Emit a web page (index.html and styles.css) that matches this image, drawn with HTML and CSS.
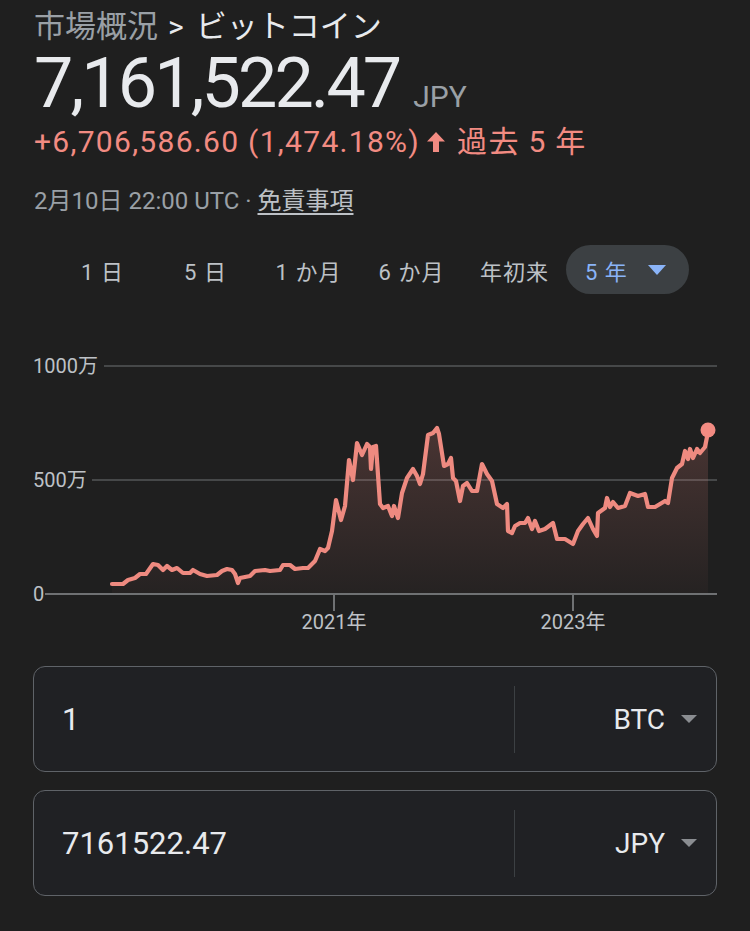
FILE: index.html
```html
<!DOCTYPE html>
<html lang="ja">
<head>
  <meta charset="UTF-8">
  <meta name="viewport" content="width=device-width, initial-scale=1.0">
  <title>ビットコイン</title>
  <link rel="stylesheet" href="styles.css">
</head>
<body>
  <main>
    <header class="summary">
      <p class="crumb"><span class="crumb-root">市場概況</span><span class="crumb-sep">&gt;</span>ビットコイン</p>
      <p class="price">7,161,522.47<span class="currency">JPY</span></p>
      <p class="change">
        +6,706,586.60 (1,474.18%)
        <svg class="arrow" viewBox="0 0 20 22" width="20" height="22"><path d="M10 1L19 10.5H13V21H7V10.5H1Z"/></svg>
        過去 5 年
      </p>
      <p class="date">2月10日 22:00 UTC · <a href="#">免責事項</a></p>
    </header>

    <nav class="tabs">
      <span class="tab">1 日</span>
      <span class="tab">5 日</span>
      <span class="tab">1 か月</span>
      <span class="tab">6 か月</span>
      <span class="tab">年初来</span>
      <span class="tab-active">5 年
        <svg viewBox="0 0 18 10" width="18" height="10"><path d="M0 0h18L9 10z"/></svg>
      </span>
    </nav>

    <svg class="chart" viewBox="0 330 750 320" width="750" height="320">
      <defs>
        <linearGradient id="fill" x1="0" y1="0" x2="0" y2="1">
          <stop offset="0" stop-color="#f28b82" stop-opacity="0.2"/>
          <stop offset="1" stop-color="#f28b82" stop-opacity="0.03"/>
        </linearGradient>
      </defs>
      <g class="grid">
        <line x1="104" y1="365" x2="717" y2="365"/>
        <line x1="92" y1="479" x2="717" y2="479"/>
      </g>
      <g class="axis-text">
        <text x="33" y="372">1000万</text>
        <text x="33" y="486">500万</text>
        <text x="33" y="600">0</text>
        <text x="334" y="628" text-anchor="middle">2021年</text>
        <text x="573" y="628" text-anchor="middle">2023年</text>
      </g>
      <path class="area" fill="url(#fill)" d="M112 583 L123 583 128 579 135 577 140 573 146 573 153 563 158 564 163 569 167 565 172 569 177 567 183 572 190 572 193 569 200 573 207 575 217 574 222 570 227 568 232 569 235 573 238 582 240 577 250 575 255 570 265 569 270 570 280 569 283 564 290 564 295 568 303 567 308 567 315 560 320 548 325 550 328 547 332 530 336 499 341 519 345 505 349 459 353 479 357 442 362 454 367 443 370 446 371 468 373 446 376 445 380 503 383 507 388 505 392 515 394 505 398 517 402 492 407 477 413 468 417 475 420 483 423 473 428 434 433 432 437 427 439 433 444 465 448 463 451 457 453 477 456 480 460 500 463 485 467 482 472 490 477 490 482 463 487 473 492 480 497 503 503 507 507 503 508 530 512 532 515 525 520 522 525 522 528 517 532 528 535 520 539 530 545 528 553 522 557 538 565 538 573 543 578 530 583 523 588 517 593 528 597 535 598 512 605 507 607 497 610 506 613 501 618 507 625 505 630 492 638 495 645 493 648 506 655 506 665 500 668 502 672 477 677 467 682 463 685 450 688 458 690 448 693 457 697 448 700 452 705 446 707 436 708 429 L708 593 L112 593 Z"/>
      <g class="baseline">
        <line x1="45" y1="593" x2="717" y2="593"/>
        <line x1="334" y1="593" x2="334" y2="610"/>
        <line x1="573" y1="593" x2="573" y2="610"/>
      </g>
      <polyline class="line" points="112,583 123,583 128,579 135,577 140,573 146,573 153,563 158,564 163,569 167,565 172,569 177,567 183,572 190,572 193,569 200,573 207,575 217,574 222,570 227,568 232,569 235,573 238,582 240,577 250,575 255,570 265,569 270,570 280,569 283,564 290,564 295,568 303,567 308,567 315,560 320,548 325,550 328,547 332,530 336,499 341,519 345,505 349,459 353,479 357,442 362,454 367,443 370,446 371,468 373,446 376,445 380,503 383,507 388,505 392,515 394,505 398,517 402,492 407,477 413,468 417,475 420,483 423,473 428,434 433,432 437,427 439,433 444,465 448,463 451,457 453,477 456,480 460,500 463,485 467,482 472,490 477,490 482,463 487,473 492,480 497,503 503,507 507,503 508,530 512,532 515,525 520,522 525,522 528,517 532,528 535,520 539,530 545,528 553,522 557,538 565,538 573,543 578,530 583,523 588,517 593,528 597,535 598,512 605,507 607,497 610,506 613,501 618,507 625,505 630,492 638,495 645,493 648,506 655,506 665,500 668,502 672,477 677,467 682,463 685,450 688,458 690,448 693,457 697,448 700,452 705,446 707,436 708,429"/>
      <circle class="dot" cx="708" cy="429" r="7.5"/>
    </svg>

    <section class="converter">
      <div class="field">
        <span class="amount">1</span>
        <span class="divider"></span>
        <span class="unit">BTC
          <svg viewBox="0 0 16 8" width="16" height="8"><path d="M0 0h16L8 8z"/></svg>
        </span>
      </div>
      <div class="field">
        <span class="amount">7161522.47</span>
        <span class="divider"></span>
        <span class="unit">JPY
          <svg viewBox="0 0 16 8" width="16" height="8"><path d="M0 0h16L8 8z"/></svg>
        </span>
      </div>
    </section>
  </main>
</body>
</html>
```

FILE: styles.css
```css
* {
  margin: 0;
  padding: 0;
  box-sizing: border-box;
}

:root {
  --bg: #1f1f1f;
  --text: #e8eaed;
  --muted: #9aa0a6;
  --soft: #bdc1c6;
  --red: #f28b82;
  --blue: #8ab4f8;
  --font: Roboto, "Noto Sans CJK JP", sans-serif;
}

body {
  background-color: var(--bg);
  color: var(--text);
  font-family: var(--font);
  width: 750px;
  min-height: 931px;
  overflow: hidden;
}

main {
  padding-top: 7px;
}

.summary {
  padding-left: 34px;
}

.crumb {
  font-size: 31px;
  line-height: 40px;
  color: var(--text);
}
.crumb-root {
  color: var(--muted);
}
.crumb-sep {
  margin: 0 12px 0 10px;
  font-size: 30px;
}

.price {
  font-size: 70px;
  line-height: 72px;
  letter-spacing: -2.9px;
  color: var(--text);
}
.currency {
  margin-left: 14px;
  font-size: 30px;
  line-height: 30px;
  letter-spacing: 0;
  color: var(--muted);
}

.change {
  display: flex;
  align-items: center;
  margin-top: 5px;
  font-size: 30px;
  line-height: 36px;
  letter-spacing: 1.3px;
  color: var(--red);
}
.arrow {
  margin: 0 11px 0 6px;
  fill: var(--red);
}

.date {
  margin-top: 26px;
  font-size: 24px;
  line-height: 30px;
  color: var(--muted);
}
.date a {
  color: var(--soft);
  text-decoration: underline;
  text-underline-offset: 4px;
}

.tabs {
  display: flex;
  align-items: center;
  margin-top: 29px;
  padding-left: 51px;
  font-size: 22px;
  color: var(--soft);
}
.tab {
  width: 103px;
  text-align: center;
  letter-spacing: 1px;
}
.tab-active {
  display: flex;
  align-items: center;
  gap: 20px;
  height: 49px;
  padding: 0 23px 0 19px;
  background-color: #3c4043;
  border-radius: 25px;
  color: var(--blue);
  letter-spacing: 1px;
}
.tab-active svg {
  fill: var(--blue);
}

.chart {
  display: block;
  margin-top: 37px;
}
.grid line {
  stroke: #555759;
  stroke-width: 1.3;
}
.baseline line {
  stroke: #6f7173;
  stroke-width: 2;
}
.axis-text {
  font-family: var(--font);
  font-size: 20px;
  fill: var(--soft);
}
.line {
  fill: none;
  stroke: #ee8a80;
  stroke-width: 4.2;
  stroke-linejoin: round;
  stroke-linecap: round;
}
.dot {
  fill: var(--red);
}

.converter {
  display: flex;
  flex-direction: column;
  gap: 18px;
  margin-top: 15px;
  padding-left: 33px;
}

.field {
  display: flex;
  align-items: center;
  width: 684px;
  height: 106px;
  background-color: #202124;
  border: 1.5px solid #5f6368;
  border-radius: 12px;
}
.amount {
  flex: 1;
  padding-left: 28px;
  font-size: 31px;
  color: var(--text);
}
.divider {
  width: 1.5px;
  height: 67px;
  background-color: #3c4043;
}
.unit {
  display: flex;
  align-items: center;
  justify-content: flex-end;
  gap: 16px;
  width: 201px;
  padding-right: 19px;
  font-size: 28px;
  color: var(--text);
}
.unit svg {
  fill: #8a8d91;
}
```
